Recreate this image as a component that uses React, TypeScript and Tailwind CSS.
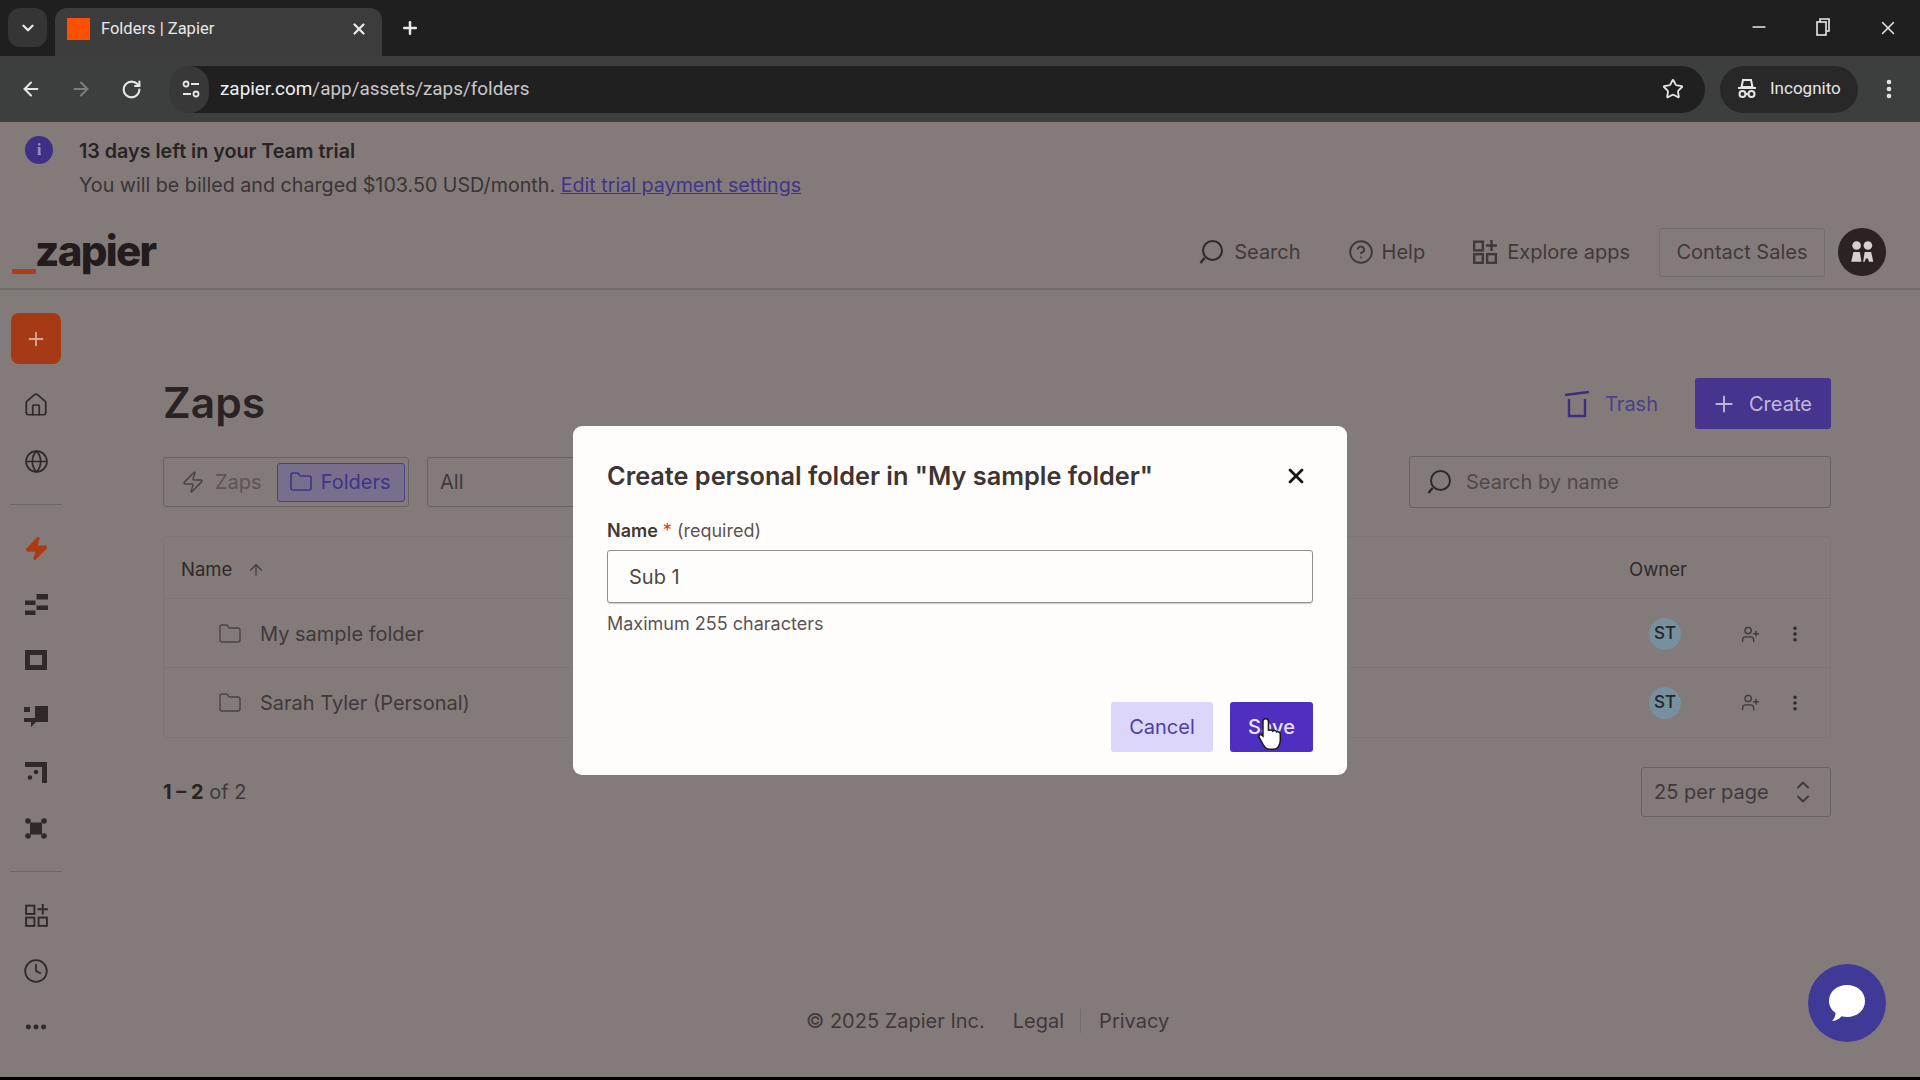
import { ArrowLeft, ArrowRight, ArrowUp, ChevronDown, ChevronUp, CircleHelp, EllipsisVertical, Folder, House, Globe, Minus, Plus, RotateCw, Star, UserPlus, X, Zap, Clock, Ellipsis } from "lucide-react";

function Favicon() {
  return <div className="h-[22px] w-[23px] bg-[#ff4f00]" />;
}

function IncognitoIcon() {
  return (
    <svg viewBox="0 0 24 24" className="h-6 w-6" fill="none" stroke="currentColor" strokeWidth="2">
      <path d="M8 3h8l1.500 7h-11z" />
      <path d="M3 11h18" />
      <circle cx="7.500" cy="17" r="3" />
      <circle cx="16.500" cy="17" r="3" />
      <path d="M10.500 17h3" />
    </svg>
  );
}

// magnifier with a big ring and a short handle, bottom left
function SearchIcon({ className }: { className: string }) {
  return (
    <svg viewBox="0 0 28 28" className={className} fill="none" stroke="currentColor">
      <circle cx="15.500" cy="12.500" r="9.500" strokeWidth="2" />
      <path d="M7.500 20l-4 5" strokeWidth="2.400" />
    </svg>
  );
}

function AppsIcon({ className, width }: { className: string; width: number }) {
  return (
    <svg viewBox="0 0 24 24" className={className} fill="none" stroke="currentColor" strokeWidth={width}>
      <rect x="2" y="2.500" width="8" height="8" />
      <rect x="2" y="14" width="8" height="8" />
      <rect x="14" y="14" width="8" height="8" />
      <path d="M18 1v10M13 6h10" />
    </svg>
  );
}

function ChromeBar() {
  return (
    <>
      <div className="flex h-14 shrink-0 bg-[#1f1f1f] text-[#e8e8e8]">
        <div className="ml-2 mt-2 flex h-[39px] w-[39px] items-center justify-center rounded-xl bg-[#353535]">
          <ChevronDown size={18} strokeWidth={3} />
        </div>
        <div className="ml-2 mt-2 flex h-12 w-[327px] items-center rounded-t-xl bg-[#3c3c3c] pb-1.5 pl-3">
          <Favicon />
          <span className="ml-[11px] w-[250px] font-['Roboto',sans-serif] text-[16.5px]">Folders | Zapier</span>
          <X size={18} strokeWidth={3} className="-ml-[1px]" />
        </div>
        <Plus size={20} strokeWidth={3} className="ml-[18px] mt-[18px]" />
        <div className="ml-auto flex items-start pt-[17px]">
          <Minus size={20} className="mr-[46px]" />
          <svg viewBox="0 0 18 20" className="mr-[44px] h-5 w-[18px]" fill="none" stroke="currentColor" strokeWidth="1.600">
            <rect x="2" y="5" width="9" height="13" />
            <path d="M5 5V2h9v12h-3" />
          </svg>
          <X size={22} strokeWidth={1.600} className="mr-[21px]" />
        </div>
      </div>
      <div className="flex h-[66px] shrink-0 items-center bg-[#3d3e3e] text-[#e6e6e6]">
        <ArrowLeft size={22} strokeWidth={2.200} className="ml-5" />
        <ArrowRight size={22} strokeWidth={2.200} className="ml-7 text-[#7d7d7d]" />
        <RotateCw size={21} strokeWidth={2.400} className="ml-[29px]" />
        <div className="ml-[27px] flex h-[47px] w-[1536px] items-center rounded-full bg-[#202020]">
          <div className="flex h-[47px] w-[40px] items-center justify-center rounded-full bg-[#383838]">
            <svg viewBox="0 0 20 20" className="ml-1 h-5 w-5" fill="none" stroke="currentColor" strokeWidth="1.800">
              <circle cx="5" cy="5" r="2.500" />
              <path d="M10 5h8M2 15h8" />
              <circle cx="15" cy="15" r="2.500" />
            </svg>
          </div>
          <span className="ml-[11px] font-['Roboto',sans-serif] text-[18.9px] text-[#c9c9c9]">
            <span className="text-[#f0f0f0]">zapier.com</span>/app/assets/zaps/folders
          </span>
          <Star size={22} strokeWidth={2} className="ml-auto mr-[21px]" />
        </div>
        <div className="ml-[15px] flex h-[47px] w-[138px] items-center rounded-full bg-[#282828] pl-[15px]">
          <IncognitoIcon />
          <span className="ml-[11px] font-['Roboto',sans-serif] text-[17px]">Incognito</span>
        </div>
        <EllipsisVertical size={24} strokeWidth={2.600} className="ml-[19px]" />
      </div>
    </>
  );
}

function Banner() {
  return (
    <div className="flex h-24 shrink-0 pl-[25px] pt-[14px]">
      <div className="flex h-7 w-7 items-center justify-center rounded-full bg-[#3f2f87] font-['Liberation_Serif',serif] text-[17px] font-bold text-[#9a90c4]">
        i
      </div>
      <div className="-mt-0.5 ml-[26px] text-[19.7px] leading-[34px] text-[#3a3435]">
        <div className="font-semibold text-[#2a2324]">13 days left in your Team trial</div>
        <div>
          You will be billed and charged $103.50 USD/month.{" "}
          <span className="text-[#40348c] underline">Edit trial payment settings</span>
        </div>
      </div>
    </div>
  );
}

function Header() {
  return (
    <div className="flex h-[72px] shrink-0 items-center border-b-2 border-[#736c6c] pb-0.5 pr-[34px] text-[20px] text-[#3f393a]">
      <div className="ml-3 flex items-end">
        <div className="mb-[3px] h-[5px] w-[24px] bg-[#a8401b]" />
        <span className="-ml-[1px] mb-[3px] text-[42px] font-extrabold leading-[46px] tracking-[-0.04em] text-[#231b1c]">zapier</span>
      </div>
      <div className="ml-auto flex items-center">
        <SearchIcon className="h-[28px] w-[28px] text-[#2f292a]" />
        <span className="ml-[9px]">Search</span>
        <CircleHelp size={26} strokeWidth={1.800} className="ml-[47px]" />
        <span className="ml-2">Help</span>
        <AppsIcon className="ml-[47px] h-[26px] w-[26px]" width={2.200} />
        <span className="ml-[9px]">Explore apps</span>
        <div className="ml-[29px] flex h-[49px] w-[166px] items-center justify-center rounded-[3px] border border-[#736c6c]">Contact Sales</div>
        <div className="ml-[13px] flex h-12 w-12 items-center justify-center rounded-full bg-[#2a2223]">
          <svg viewBox="0 0 26 24" className="h-[28px] w-[28px]" fill="#d6d0d0">
            <circle cx="8" cy="6" r="4" />
            <circle cx="18.500" cy="6" r="4" />
            <path d="M3 21l2-9h6l1.500 9zM14 21l1.500-9h6l2 9h-4l-1-3h-2l-1 3z" />
          </svg>
        </div>
      </div>
    </div>
  );
}

function SideItem({ children }: { children: React.ReactNode }) {
  return <div className="flex h-14 items-center justify-center text-[#2f292a]">{children}</div>;
}

function Sidebar() {
  return (
    <div className="w-[72px] shrink-0 pt-[23px]">
      <div className="mx-[11px] mb-[13px] flex h-[51px] w-[50px] items-center justify-center rounded-lg bg-[#a63a17] text-[#d9a792]">
        <Plus size={22} strokeWidth={2} />
      </div>
      <SideItem><House size={26} strokeWidth={1.600} /></SideItem>
      <SideItem><Globe size={25} strokeWidth={1.600} /></SideItem>
      <div className="mx-2.5 my-[15px] h-px w-[52px] bg-[#6e6767]" />
      <SideItem><Zap size={25} fill="#ac3a13" stroke="#ac3a13" /></SideItem>
      <SideItem>
        <svg viewBox="0 0 23 21" className="h-[21px] w-[23px]" fill="currentColor">
          <path d="M11.500 0H23v5.500H11.500zM0 6.500h10.500V11H0zM11.500 11.500H23v4.500H11.500zM0 16.500h10.500V21H0z" />
        </svg>
      </SideItem>
      <SideItem>
        <svg viewBox="0 0 22 20" className="h-5 w-[22px]" fill="none" stroke="currentColor" strokeWidth="5">
          <path d="M2.500 2.500h17v15h-17z" />
        </svg>
      </SideItem>
      <SideItem>
        <svg viewBox="0 0 24 21" className="h-[21px] w-6" fill="currentColor">
          <path d="M11 0h13v16H12l-5 5v-5H0v-4h11z" />
          <path d="M0 1h6v5H0z" />
        </svg>
      </SideItem>
      <SideItem>
        <svg viewBox="0 0 22 21" className="h-[21px] w-[22px]" fill="currentColor">
          <path d="M0 0h22v21h-5V5H0z" />
          <circle cx="11" cy="10" r="2.300" />
          <circle cx="5" cy="15.500" r="2.300" />
        </svg>
      </SideItem>
      <SideItem>
        <svg viewBox="0 0 22 21" className="h-[21px] w-[22px]" fill="currentColor">
          <path d="M5 4.500h12v12H5z" />
          <circle cx="3" cy="3" r="2.800" />
          <circle cx="19" cy="3" r="2.800" />
          <circle cx="3" cy="18" r="2.800" />
          <circle cx="19" cy="18" r="2.800" />
        </svg>
      </SideItem>
      <div className="mx-2.5 my-[15px] h-px w-[52px] bg-[#6e6767]" />
      <SideItem><AppsIcon className="h-[25px] w-[25px]" width={1.800} /></SideItem>
      <SideItem><Clock size={26} strokeWidth={1.600} /></SideItem>
      <SideItem><Ellipsis size={26} strokeWidth={2.600} /></SideItem>
    </div>
  );
}

function Row({ name, line }: { name: string; line: boolean }) {
  return (
    <div className={`flex h-[69px] items-center ${line ? "border-b border-[#7c7574] pt-0.5" : ""}`}>
      <Folder size={24} strokeWidth={1.400} className="ml-[54px] text-[#4a4445]" />
      <span className="ml-[18px] text-[20px] text-[#3f393a]">{name}</span>
      <div className="ml-auto flex h-8 w-8 items-center justify-center rounded-full bg-[#76909f] text-[17px] font-medium text-[#26262a]">ST</div>
      <UserPlus size={19} strokeWidth={1.700} className="ml-[60px] text-[#3f393a]" />
      <EllipsisVertical size={20} strokeWidth={2.200} className="ml-[25px] mr-[25px] text-[#2f292a]" />
    </div>
  );
}

function Main() {
  return (
    <div className="flex min-w-0 flex-1 flex-col pl-[91px] pr-[89px] pt-[88px]">
      <div className="flex h-[51px] items-center">
        <h1 className="text-[42.5px] font-semibold leading-none text-[#2a2324]">Zaps</h1>
        <svg viewBox="0 0 26 28" className="ml-auto h-7 w-[26px] text-[#3b2e82]" fill="none" stroke="currentColor" strokeWidth="2.400">
          <path d="M1 5l24-3" />
          <path d="M5 9v17h16V9" />
        </svg>
        <span className="ml-[15px] text-[20px] text-[#4a3f8a]">Trash</span>
        <div className="ml-[37px] flex h-[51px] w-[136px] items-center rounded-[3px] bg-[#46348f] pl-4 text-[20px] text-[#c0bad6]">
          <Plus size={26} strokeWidth={1.700} />
          <span className="ml-3">Create</span>
        </div>
      </div>
      <div className="mt-[27px] flex h-[52px] items-center text-[20px]">
        <div className="flex h-[50px] w-[246px] items-center rounded-[3px] border border-[#696263] pl-[5px]">
          <Zap size={24} strokeWidth={1.500} className="ml-3 text-[#4a4445]" />
          <span className="ml-2.5 text-[#5c5556]">Zaps</span>
          <div className="ml-[15px] flex h-[39px] w-[128px] items-center rounded-[3px] border border-[#4a3f8a] bg-[#786f8d] pl-[11px] text-[#3f338a]">
            <Folder size={24} strokeWidth={1.600} />
            <span className="ml-2">Folders</span>
          </div>
        </div>
        <div className="ml-[18px] flex h-[50px] w-[200px] items-center rounded-[3px] border border-[#696263] pl-3 text-[#3f393a]">All</div>
        <div className="ml-auto flex h-[52px] w-[422px] items-center rounded-[3px] border border-[#696263] pl-[15px] text-[#4f494a]">
          <SearchIcon className="h-7 w-7 text-[#2f292a]" />
          <span className="ml-[13px]">Search by name</span>
        </div>
      </div>
      <div className="mt-[28px] rounded-sm border border-[#7c7574]">
        <div className="flex h-[62px] items-center border-b border-[#7c7574] pt-[5px] text-[18.5px] text-[#2f292a]">
          <span className="ml-[17px]">Name</span>
          <ArrowUp size={18} strokeWidth={1.600} className="ml-[15px] text-[#3f393a]" />
          <span className="ml-auto mr-[143px]">Owner</span>
        </div>
        <Row name="My sample folder" line />
        <Row name="Sarah Tyler (Personal)" line={false} />
      </div>
      <div className="mt-[29px] flex h-[50px] items-center text-[20px] text-[#3f393a]">
        <span><b className="font-bold text-[#2a2324]">1 – 2</b> of 2</span>
        <div className="ml-auto flex h-[50px] w-[190px] items-center rounded-[3px] border border-[#696263] pl-3">
          <span>25 per page</span>
          <div className="ml-6 flex flex-col">
            <ChevronUp size={20} strokeWidth={2.200} className="-mb-1.5" />
            <ChevronDown size={20} strokeWidth={2.200} />
          </div>
        </div>
      </div>
      <div className="mt-[189px] flex items-center pl-[643px] text-[20px] text-[#3f393a]">
        <span>© 2025 Zapier Inc.</span>
        <span className="ml-7">Legal</span>
        <div className="ml-4 mr-[18px] h-6 w-px bg-[#736c6c]" />
        <span>Privacy</span>
      </div>
    </div>
  );
}

function Modal() {
  return (
    <div className="absolute left-[573px] top-[426px] flex h-[349px] w-[774px] flex-col rounded-[9px] bg-[#fffdfb] px-[34px] pt-[32px] text-[#413735]">
      <div className="flex h-9 items-center">
        <h2 className="text-[25.3px] font-semibold text-[#3d3533]">Create personal folder in "My sample folder"</h2>
        <X size={24} strokeWidth={2.800} className="ml-auto mr-[5px] text-[#1b1514]" />
      </div>
      <div className="mt-[25px] text-[18px] leading-6">
        <span className="font-semibold">Name</span>
        <span className="ml-[5px] text-[#d9431a]">*</span>
        <span className="ml-[5px] text-[#5c5452]">(required)</span>
      </div>
      <div className="mt-[7px] flex h-[53px] items-center rounded-[3px] border border-[#958e8c] pl-[21px] text-[20px] text-[#4f4745] shadow-[0_1px_1px_rgba(0,0,0,0.2)]">Sub 1</div>
      <div className="mt-[9px] text-[18px] leading-6 text-[#5c5452]">Maximum 255 characters</div>
      <div className="mt-[66px] flex justify-end gap-[17px] text-[20px]">
        <div className="flex h-[50px] w-[102px] items-center justify-center rounded-[3px] bg-[#dbd6fa] text-[#4e3fa6]">Cancel</div>
        <div className="flex h-[50px] w-[83px] items-center justify-center rounded-[3px] bg-[#4f2fc0] font-medium text-[#e9e4fb]">Save</div>
      </div>
      <svg viewBox="0 0 24 32" className="absolute left-[684px] top-[290px] h-[36px] w-[26px]" fill="#ffffff" stroke="#1a1a1a" strokeWidth="1.400">
        <path d="M8 2c1.600 0 2.600 1 2.600 2.500V13c.5-1 3.400-1 4 .3.8-.8 3.200-.6 3.600.8 1-.5 3.300 0 3.300 2v6c0 4-2.500 8-6 8h-4c-3 0-4.500-2-6-4.500L2 19c-.8-1.400.6-3 2-2.300l1.500 1.300V4.500C5.500 3 6.400 2 8 2z" />
      </svg>
    </div>
  );
}

export default function App() {
  return (
    <div className="relative flex h-[1080px] w-[1920px] flex-col overflow-hidden bg-[#827b7a] font-['Inter',sans-serif]">
      <ChromeBar />
      <Banner />
      <Header />
      <div className="flex min-h-0 flex-1">
        <Sidebar />
        <Main />
      </div>
      <div className="h-[3px] shrink-0 bg-black" />
      <Modal />
      <div className="absolute left-[1808px] top-[964px] flex h-[78px] w-[78px] items-center justify-center rounded-full bg-[#3f3a98]">
        <svg viewBox="0 0 42 42" className="h-[42px] w-[42px]" fill="#ffffff">
          <path d="M21 3c10 0 18 6.600 18 16s-8 16-18 16c-2 0-3.800-.3-5.500-.8C13 37 9.500 39 6 39c2-2 3.500-5 3.500-8C5.500 28 3 24 3 19 3 9.600 11 3 21 3z" />
        </svg>
      </div>
    </div>
  );
}
